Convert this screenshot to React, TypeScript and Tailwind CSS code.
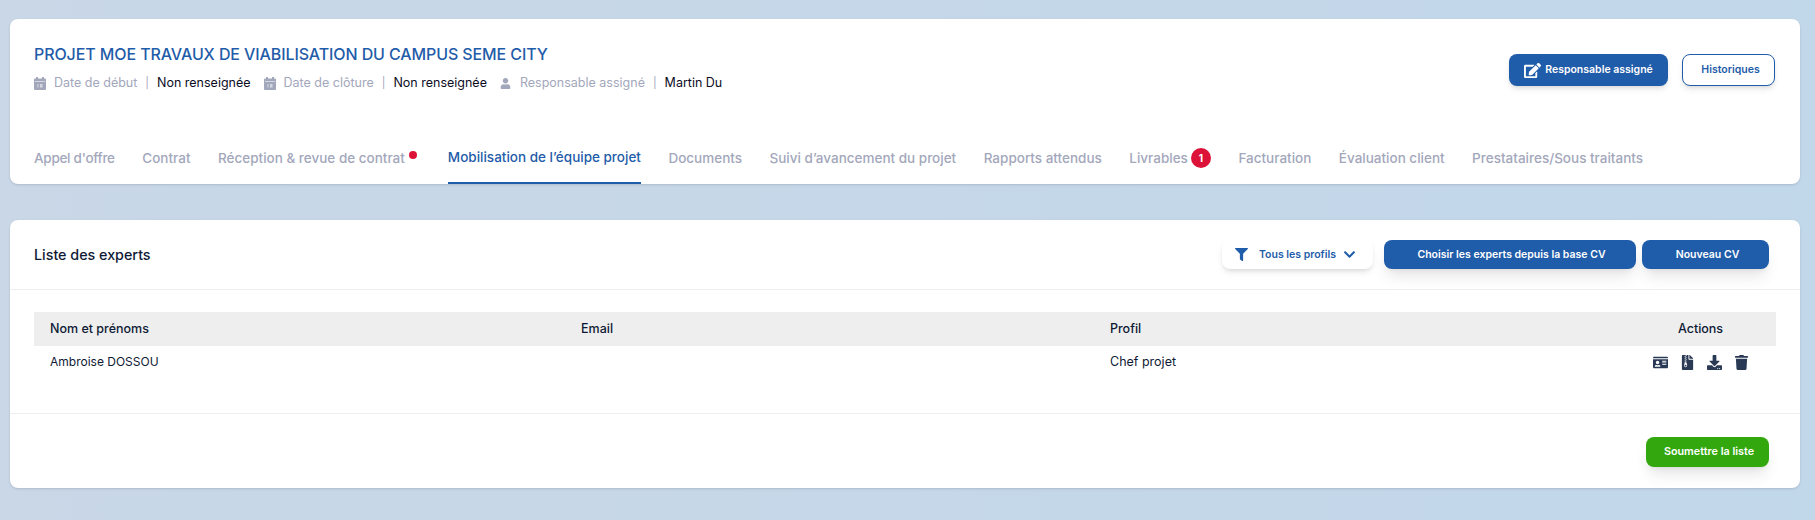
import React from 'react';
import {
  FaChevronDown,
  FaDownload,
  FaEdit,
  FaFileArchive,
  FaFilter,
  FaIdCard,
  FaTrash,
  FaUser,
} from 'react-icons/fa';

const tabs = [
  { label: "Appel d'offre", tight: true },
  { label: 'Contrat' },
  { label: 'Réception & revue de contrat', dot: true },
  { label: 'Mobilisation de l’équipe projet', active: true },
  { label: 'Documents' },
  { label: 'Suivi d’avancement du projet' },
  { label: 'Rapports attendus' },
  { label: 'Livrables', count: 1 },
  { label: 'Facturation' },
  { label: 'Évaluation client' },
  { label: 'Prestataires/Sous traitants' },
];

const CalendarIcon = () => (
  <svg width="12" height="13" viewBox="0 0 12 13" fill="currentColor">
    <rect x="2" y="0" width="2" height="3" />
    <rect x="8" y="0" width="2" height="3" />
    <rect x="0" y="1.5" width="12" height="11.5" rx="1" />
    <rect x="1" y="4" width="10" height="0.8" fill="#ffffff" opacity="0.7" />
    <rect x="3.5" y="7" width="1" height="3.5" fill="#ffffff" opacity="0.55" />
    <rect x="6" y="7" width="2.5" height="3.5" fill="#ffffff" opacity="0.55" />
  </svg>
);

const Meta: React.FC<{ icon: React.ReactNode; label: string; value: string }> = ({ icon, label, value }) => (
  <div className="flex items-center">
    <span className="mr-[8px] flex w-[12px] justify-center text-[#a3a7bb]">{icon}</span>
    <span className="text-[#a3a7bb]">{label}</span>
    <span className="mx-[8px] text-[11px] text-[#a3a7bb]">|</span>
    <span className="text-[#0c0c1e]">{value}</span>
  </div>
);

export default function App() {
  return (
    <div className="flex min-h-[520px] flex-col gap-[36px] bg-gradient-to-r from-[#c9d7e7] to-[#c1d7ea] pl-[10px] pr-[15px] pt-[19px] font-['Inter',sans-serif]">
      <section className="flex h-[165px] flex-col rounded-[8px] bg-white shadow-sm">
        <header className="flex justify-between pl-[24px] pr-[25px] pt-[24px]">
          <div>
            <h1 className="text-[16px] font-medium leading-[22px] tracking-[-0.1px] text-[#1f5ca9]">
              PROJET MOE TRAVAUX DE VIABILISATION DU CAMPUS SEME CITY
            </h1>
            <div className="mt-[8px] flex gap-[13px] text-[12.5px] leading-[20px]">
              <Meta icon={<CalendarIcon />} label="Date de début" value="Non renseignée" />
              <Meta icon={<CalendarIcon />} label="Date de clôture" value="Non renseignée" />
              <Meta icon={<FaUser size={11} />} label="Responsable assigné" value="Martin Du" />
            </div>
          </div>
          <div className="mt-[11px] flex h-[32px] gap-[14px] text-[10.5px] font-semibold">
            <button className="flex w-[159px] items-center justify-center gap-[4px] rounded-[8px] bg-[#1f5ca9] text-white shadow-md">
              <FaEdit size={17} />
              Responsable assigné
            </button>
            <button className="w-[93px] rounded-[8px] border border-[#1f5ca9] bg-white pl-[4px] text-[#1f5ca9] shadow-md">
              Historiques
            </button>
          </div>
        </header>
        <nav className="mt-auto flex gap-[27.5px] pl-[24px] text-[13.5px] font-medium">
          {tabs.map(({ active, count, dot, label, tight }) => (
            <div
              key={label}
              className={
                active
                  ? 'flex h-[52px] items-center border-b-2 border-[#1f5ca9] text-[#1f5ca9]'
                  : tight
                    ? 'flex h-[52px] items-center tracking-[-0.27px] text-[#a3a7bb]'
                    : 'flex h-[52px] items-center text-[#a3a7bb]'
              }
            >
              {label}
              {dot && <span className="mb-[6px] ml-[4px] mr-[3.5px] h-[8px] w-[8px] rounded-full bg-[#dc1238]" />}
              {count && (
                <span className="ml-[3px] flex h-[20px] w-[20px] items-center justify-center rounded-full bg-[#dc1238] text-[10px] font-bold text-white">
                  {count}
                </span>
              )}
            </div>
          ))}
        </nav>
      </section>

      <section className="flex h-[268px] flex-col rounded-[8px] bg-white shadow-sm">
        <header className="flex h-[70px] items-center justify-between border-b border-[#eeeeee] pl-[24px] pr-[31px]">
          <h2 className="text-[14.3px] font-medium text-[#0f1a35]">Liste des experts</h2>
          <div className="flex h-[29px] text-[10.5px] font-semibold">
            <button className="mr-[11px] flex w-[151px] items-center rounded-[8px] bg-white pl-[13px] text-[#1f5ca9] shadow-md">
              <FaFilter size={13} />
              <span className="ml-[11px] mr-[7px]">Tous les profils</span>
              <FaChevronDown size={13} />
            </button>
            <button className="mr-[6px] w-[252px] rounded-[8px] bg-[#1f5ca9] pl-[3px] text-white shadow-lg">
              Choisir les experts depuis la base CV
            </button>
            <button className="w-[127px] rounded-[8px] bg-[#1f5ca9] pl-[4px] text-white shadow-lg">Nouveau CV</button>
          </div>
        </header>

        <div className="h-[124px] border-b border-[#eeeeee] px-[24px] pt-[22px] text-[12.5px] text-[#0f1a35]">
          <div className="grid h-[34px] grid-cols-[531px_529px_1fr_151px] items-center bg-[#eeeeee] font-medium">
            <span className="pl-[16px]">Nom et prénoms</span>
            <span className="pl-[16px]">Email</span>
            <span className="pl-[16px]">Profil</span>
            <span className="text-center">Actions</span>
          </div>
          <div className="grid grid-cols-[531px_529px_1fr_151px] items-center pt-[7px]">
            <span className="pl-[16px] text-[12px]">Ambroise DOSSOU</span>
            <span />
            <span className="pl-[16px]">Chef projet</span>
            <div className="flex items-center justify-center gap-[12px] text-[#2a3a55]">
              <FaIdCard size={15} />
              <FaFileArchive size={15} />
              <FaDownload size={15} />
              <FaTrash size={15} />
            </div>
          </div>
        </div>

        <footer className="flex justify-end pr-[31px] pt-[23px]">
          <button className="h-[30px] w-[123px] rounded-[8px] bg-[#32a80e] pl-[3px] text-[10.8px] font-semibold text-white shadow-lg">
            Soumettre la liste
          </button>
        </footer>
      </section>
    </div>
  );
}
